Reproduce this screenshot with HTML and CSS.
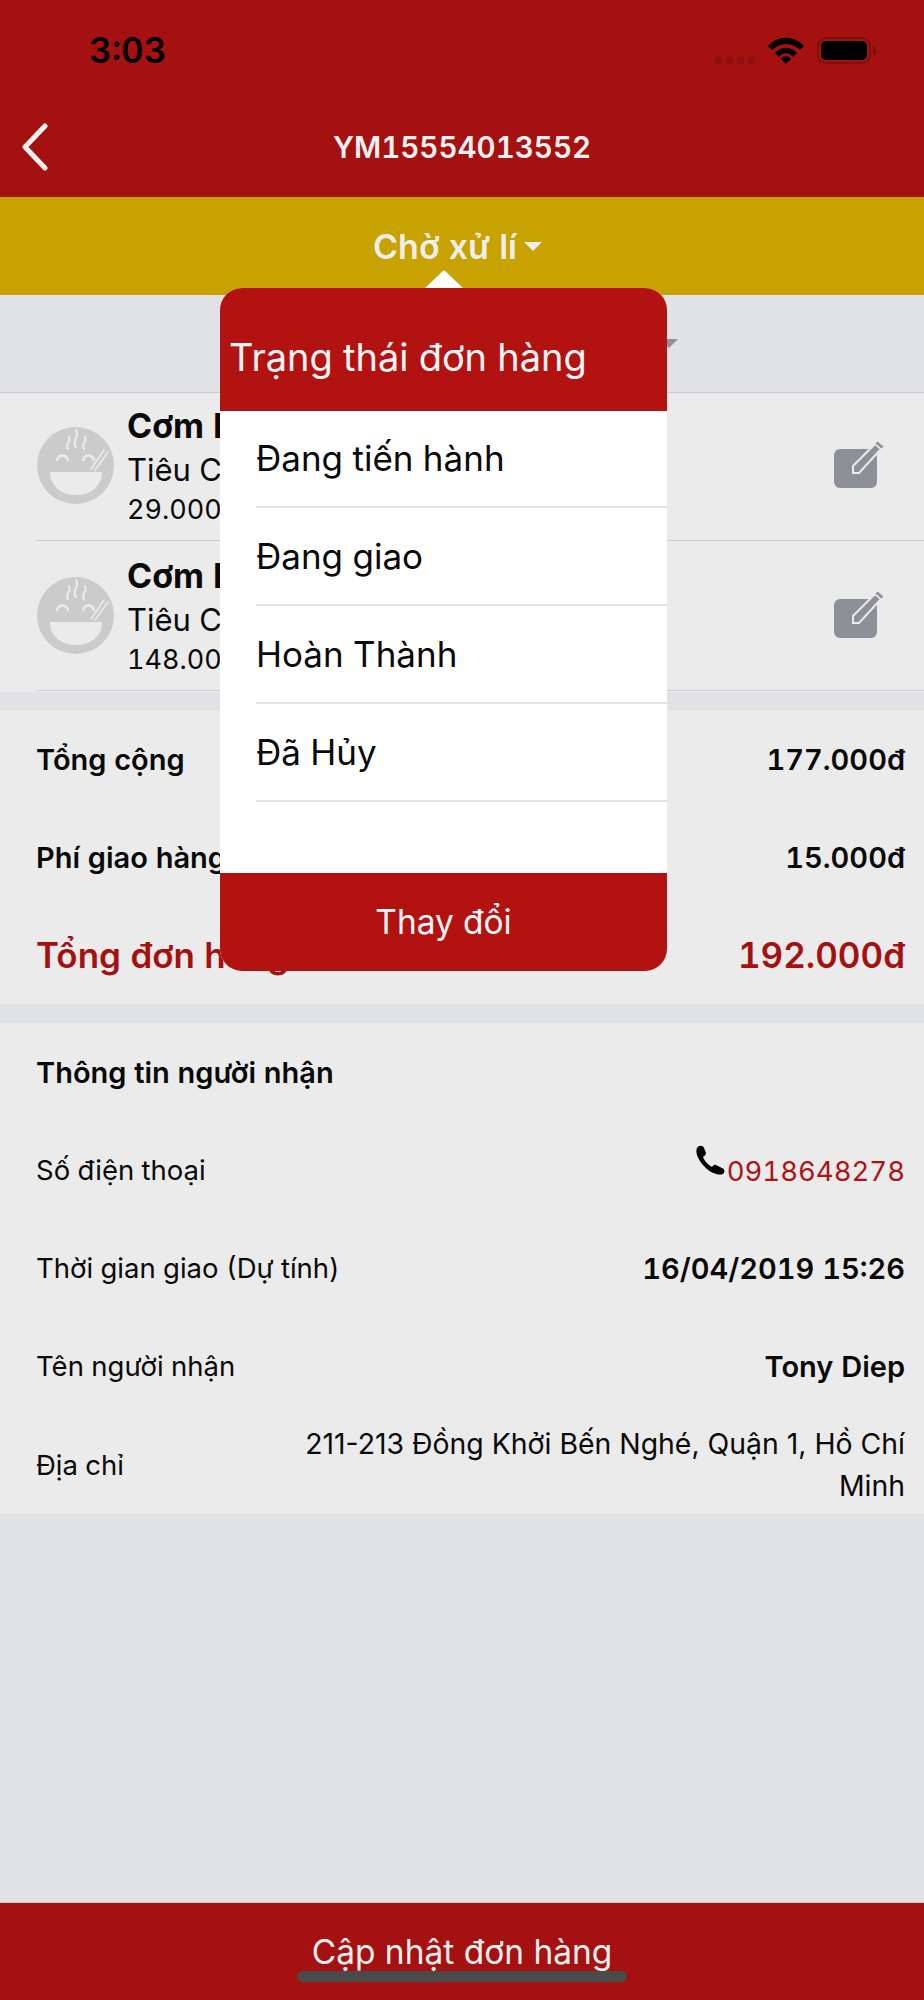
FILE: index.html
```html
<!DOCTYPE html>
<html>
  <head>
    <meta charset="utf-8">
    <meta name="viewport" content="width=device-width, initial-scale=1">
    <title>YM15554013552</title>
    <link rel="stylesheet" href="styles.css">
  </head>
  <body>
    <svg class="sprites" width="0" height="0">
      <symbol id="bowl" viewBox="0 0 77 77">
        <circle cx="38.5" cy="38.5" r="38.5" fill="#cbcbcb"/>
        <path d="M13 45H65C65 60 53 68 39 68S13 60 13 45Z" fill="#ebebeb"/>
        <g fill="none" stroke="#ebebeb" stroke-linecap="round">
          <path d="M20 33C22 27 29 27 31 33" stroke-width="2.4"/>
          <path d="M46 33C48 27 55 27 57 33" stroke-width="2.4"/>
          <path d="M31 22C27 17 35 15 32 10" stroke-width="2.2"/>
          <path d="M39 20C34 14 43 10 39 3" stroke-width="2.2"/>
          <path d="M47 22C43 17 51 15 48 10" stroke-width="2.2"/>
          <path d="M54 42L67 23" stroke-width="1.6"/>
          <path d="M58 43L71 25" stroke-width="1.6"/>
        </g>
      </symbol>
      <symbol id="edit" viewBox="0 0 50 47">
        <rect x="0" y="8" width="43" height="39" rx="6" fill="#8e9097"/>
        <path d="M19 32V25L41 3L47 8L25 32Z" fill="#8e9097" stroke="#ebebeb" stroke-width="2"/>
        <path d="M43.5 0.5L49.5 5.5L47.5 7.5L41.5 2.5Z" fill="#8e9097"/>
      </symbol>
    </svg>

    <div class="screen">
      <header class="top">
        <div class="status">
          <span class="clock">3:03</span>
          <div class="status-icons">
            <div class="signal"><i></i><i></i><i></i><i></i></div>
            <svg class="wifi" viewBox="0 0 36 27" width="36" height="27">
              <path d="M0 9C10 -2 26 -2 36 9L32 13C24 5 12 5 4 13Z"/>
              <path d="M7 16C13 9 23 9 29 16L25 20C21 15 15 15 11 20Z"/>
              <path d="M13 22C16 18 20 18 23 22L18 27Z"/>
            </svg>
            <div class="battery"><i></i></div>
            <div class="battery-nub"></div>
          </div>
        </div>
        <div class="nav">
          <svg class="back" viewBox="0 0 28 48" width="28" height="48">
            <path d="M24 3L4 24L24 45" fill="none" stroke="#f2f2f2" stroke-width="5" stroke-linecap="round" stroke-linejoin="round"/>
          </svg>
          <h1 class="nav-title">YM15554013552</h1>
        </div>
      </header>

      <div class="state-bar">
        <span>Chờ xử lí</span><i class="caret"></i>
      </div>
      <div class="filter-bar"><i class="caret caret-gray"></i></div>

      <section class="items">
        <div class="item">
          <svg class="item-pic"><use href="#bowl"/></svg>
          <div class="item-text">
            <div class="item-name">Cơm H</div>
            <div class="item-size">Tiêu C</div>
            <div class="item-price">29.000đ</div>
          </div>
          <svg class="item-edit"><use href="#edit"/></svg>
        </div>
        <div class="item">
          <svg class="item-pic"><use href="#bowl"/></svg>
          <div class="item-text">
            <div class="item-name">Cơm H</div>
            <div class="item-size">Tiêu C</div>
            <div class="item-price">148.000đ</div>
          </div>
          <svg class="item-edit"><use href="#edit"/></svg>
        </div>
      </section>

      <section class="panel">
        <div class="row"><b>Tổng cộng</b><b>177.000đ</b></div>
        <div class="row"><b>Phí giao hàng</b><b>15.000đ</b></div>
        <div class="row row-total"><b>Tổng đơn hàng</b><b>192.000đ</b></div>
      </section>

      <section class="panel panel-info">
        <div class="row"><b>Thông tin người nhận</b></div>
        <div class="row">
          <span>Số điện thoại</span>
          <span class="phone">
            <svg class="phone-icon" viewBox="0 0 30 30" width="30" height="30">
              <path d="M2 3C4 0 8 0 9 3L11 8C11 10 9 11 8 12C9 15 13 20 17 22C18 21 19 19 21 20L27 23C30 24 30 27 28 29C24 31 15 28 9 21C3 15 0 7 2 3Z"/>
            </svg>
            <span class="phone-num">0918648278</span>
          </span>
        </div>
        <div class="row"><span>Thời gian giao (Dự tính)</span><b>16/04/2019 15:26</b></div>
        <div class="row"><span>Tên người nhận</span><b>Tony Diep</b></div>
        <div class="row row-address">
          <span>Địa chỉ</span>
          <span class="address">211-213 Đồng Khởi Bến Nghé, Quận 1, Hồ Chí Minh</span>
        </div>
      </section>

      <button class="update-btn">Cập nhật đơn hàng</button>
      <div class="home-bar"></div>

      <!-- popup chọn trạng thái -->
      <div class="popup">
        <div class="popup-head">Trạng thái đơn hàng</div>
        <ul class="popup-list">
          <li>Đang tiến hành</li>
          <li>Đang giao</li>
          <li>Hoàn Thành</li>
          <li>Đã Hủy</li>
        </ul>
        <div class="popup-btn">Thay đổi</div>
      </div>
    </div>
  </body>
</html>
```

FILE: styles.css
```css
* {
  box-sizing: border-box;
}
html, body {
  margin: 0;
  padding: 0;
}
body {
  font-family: Inter, "Liberation Sans", sans-serif;
  font-variant-numeric: tabular-nums;
  color: #0a0a0a;
}
.sprites {
  position: absolute;
}
.screen {
  position: relative;
  display: flex;
  flex-direction: column;
  width: 924px;
  height: 2000px;
  background: #e1e2e6;
  overflow: hidden;
}

/* -------- header ------------- */
.top {
  height: 197px;
  background: #a51110;
}
.status {
  display: flex;
  justify-content: space-between;
  align-items: center;
  height: 100px;
  padding: 0 48px 0 89px;
}
.clock {
  font-size: 35px;
  font-weight: 600;
  color: #000;
}
.status-icons {
  display: flex;
  align-items: center;
}
.signal {
  display: flex;
  gap: 4px;
  margin: 20px 13px 0 0;
}
.signal i {
  width: 7px;
  height: 7px;
  border-radius: 2px;
  background: #8c1010;
}
.wifi {
  margin-right: 13px;
}
.battery {
  width: 54px;
  height: 27px;
  padding: 2px;
  border: 2px solid #7a1010;
  border-radius: 9px;
  background: #a51110;
}
.battery i {
  display: block;
  height: 100%;
  border-radius: 5px;
  background: #000;
}
.battery-nub {
  width: 3px;
  height: 9px;
  margin-left: 2px;
  border-radius: 0 3px 3px 0;
  background: #7a1010;
}
.nav {
  position: relative;
  display: flex;
  justify-content: center;
  align-items: center;
  height: 94px;
}
.back {
  position: absolute;
  left: 21px;
  top: 23px;
}
.nav-title {
  margin: 0;
  font-size: 29.5px;
  font-weight: 600;
  color: #f0f0f0;
}

/* -------- state bars ------------- */
.state-bar {
  display: flex;
  justify-content: center;
  align-items: center;
  height: 98px;
  padding-right: 9px;
  background: #c8a200;
  color: #eee;
  font-size: 34px;
  font-weight: 600;
}
.caret {
  width: 0;
  height: 0;
  margin-left: 7px;
  border-top: 9px solid #eee;
  border-left: 9px solid transparent;
  border-right: 9px solid transparent;
}
.caret-gray {
  margin: 0;
  border-top-color: #8e9097;
}
.filter-bar {
  display: flex;
  justify-content: flex-end;
  align-items: center;
  height: 98px;
  padding: 0 246px 0 0;
  border-bottom: 1px solid #c9c9c9;
}

/* -------- items ------------- */
.items {
  height: 299px;
  padding-left: 36px;
  background: #ebebeb;
}
.item {
  display: flex;
  align-items: center;
  height: 148px;
  padding-right: 41px;
  border-bottom: 1px solid #cfcfd3;
}
.item + .item {
  height: 150px;
  padding-top: 2px;
}
.item-pic {
  flex: none;
  width: 77px;
  height: 77px;
  margin: 0 13px 2px 1px;
}
.item-text {
  flex: none;
  margin-bottom: 2px;
  font-size: 31px;
  line-height: 44px;
  white-space: nowrap;
}
.item-name {
  font-size: 34px;
  font-weight: 700;
}
.item-price {
  font-size: 27px;
  line-height: 36px;
}
.item-edit {
  flex: none;
  width: 50px;
  height: 47px;
  margin: 0 -1px 5px auto;
}

/* -------- panels ------------- */
.panel {
  margin-top: 18px;
  padding: 0 19px 0 36px;
  background: #ebebeb;
  font-size: 27.5px;
}
.panel-info {
  margin-top: 19px;
}
.row {
  display: flex;
  justify-content: space-between;
  align-items: center;
  height: 98px;
}
.row b {
  font-size: 29px;
  font-weight: 600;
}
.row-total {
  color: #a51110;
}
.row-total b {
  font-size: 35px;
}
.panel-info .row-address {
  height: 99px;
}
.phone {
  display: flex;
  align-items: flex-start;
}
.phone-icon {
  flex: none;
  margin: -7px 2px 0 0;
}
.phone-num {
  color: #ad1414;
  margin-top: 2px;
}
.address {
  width: 610px;
  font-size: 28.4px;
  font-variant-numeric: normal;
  line-height: 42px;
  text-align: right;
}

/* -------- bottom ------------- */
.update-btn {
  display: block;
  width: 100%;
  height: 98px;
  margin-top: auto;
  padding: 0;
  border: 0;
  border-top: 1px solid #c9c9c9;
  background: #a51110;
  color: #eee;
  font-family: inherit;
  font-size: 33.5px;
}
.home-bar {
  position: absolute;
  left: 297px;
  bottom: 18px;
  width: 330px;
  height: 11px;
  border-radius: 6px;
  background: #4a4a4a;
}

/* -------- popup ------------- */
.popup {
  position: absolute;
  left: 220px;
  top: 288px;
  display: flex;
  flex-direction: column;
  width: 447px;
  height: 683px;
  border-radius: 22px;
  background: #fff;
}
.popup::before {
  position: absolute;
  content: '';
  left: 205px;
  top: -18px;
  width: 0;
  height: 0;
  border-bottom: 18px solid #fff;
  border-left: 19px solid transparent;
  border-right: 19px solid transparent;
}
.popup-head {
  display: flex;
  align-items: center;
  height: 123px;
  padding: 14px 0 0 9px;
  border-radius: 22px 22px 0 0;
  background: #b21311;
  color: #f5f5f5;
  font-size: 38px;
  white-space: nowrap;
}
.popup-list {
  flex: 1;
  margin: -1px 0 0;
  padding: 0 0 0 36px;
  list-style: none;
  font-size: 35px;
}
.popup-list li {
  display: flex;
  align-items: center;
  height: 98px;
  border-bottom: 2px solid #e3e3e6;
}
.popup-btn {
  display: flex;
  justify-content: center;
  align-items: center;
  height: 98px;
  border-radius: 0 0 22px 22px;
  background: #b21311;
  color: #f5f5f5;
  font-size: 33.5px;
}
```
